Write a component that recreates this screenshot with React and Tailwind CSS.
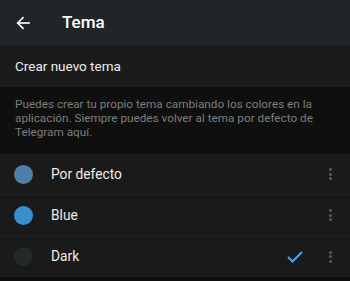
import React from "react";

const themes = [
  { name: "Por defecto", color: "bg-[#4e7fab]", checked: false },
  { name: "Blue", color: "bg-[#3a8ecd]", checked: false },
  { name: "Dark", color: "bg-[#23292b]", checked: true },
];

function Dots() {
  return (
    <div className="flex flex-col items-center gap-[1.5px] w-[4px]">
      <span className="w-[3px] h-[3px] rounded-full bg-[#5c5c5c]" />
      <span className="w-[3px] h-[3px] rounded-full bg-[#5c5c5c]" />
      <span className="w-[3px] h-[3px] rounded-full bg-[#5c5c5c]" />
    </div>
  );
}

export default function App() {
  return (
    <div className="w-[350px] h-[281px] bg-[#0f0f0f] overflow-hidden" style={{ fontFamily: "Roboto, sans-serif" }}>
      <div className="h-[46px] bg-[#222527] flex items-center">
        <svg className="ml-[14px]" width="18" height="18" viewBox="0 0 24 24" fill="none" stroke="#ffffff" strokeWidth="2.2" strokeLinecap="square">
          <path d="M20 12H5" />
          <path d="M12 5l-7 7 7 7" />
        </svg>
        <span className="ml-[30px] text-[17px] font-medium text-white">Tema</span>
      </div>
      <div className="h-[41px] bg-[#1b1b1b] flex items-center px-[15px] text-[13.5px] text-[#ececec]">
        Crear nuevo tema
      </div>
      <div className="h-[67px] bg-[#0f0f0f] px-[15px] pt-[10px] text-[11.75px] leading-[14px] text-[#7d7d7d]">
        Puedes crear tu propio tema cambiando los colores en la aplicación. Siempre puedes volver al tema por defecto de Telegram aquí.
      </div>
      <div className="bg-[#1a1a1a]">
        {themes.map((t, i) => (
          <div key={t.name} className={`h-[41px] flex items-center pl-[14px] pr-[18px] ${i < 2 ? "border-b border-[#232323]" : ""}`}>
            <span className={`w-[19px] h-[19px] rounded-full ${t.color}`} />
            <span className="ml-[18px] text-[13.75px] text-[#ececec] flex-1">{t.name}</span>
            {t.checked && (
              <svg className="mr-[25px]" width="16" height="12" viewBox="0 0 16 12" fill="none" stroke="#4aa3e6" strokeWidth="2">
                <path d="M1 6l4.5 4.5L15 1" />
              </svg>
            )}
            <Dots />
          </div>
        ))}
      </div>
    </div>
  );
}
